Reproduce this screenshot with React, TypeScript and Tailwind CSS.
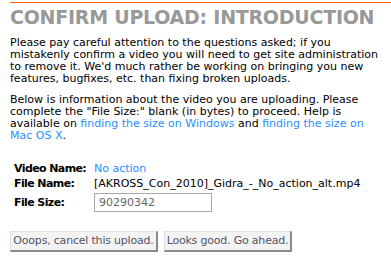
export default function App() {
  const font = { fontFamily: '"DejaVu Sans", Verdana, sans-serif' };
  const btn =
    "h-[21px] bg-[#f3f3f3] text-[#555566] text-[11px] tracking-[-0.2px] border-t border-l border-[#e0e0e0] border-r-2 border-b-2 border-r-[#8a8a8a] border-b-[#8a8a8a] whitespace-nowrap";
  return (
    <div className="bg-white w-[391px] h-[269px] overflow-hidden pl-[10px] pt-[2px] text-[11px] leading-[12px] text-black" style={font}>
      <div className="border-t border-[#ff6600] pt-[3px]">
        <h1 className="text-[19px] leading-[23px] font-bold text-[#999999] tracking-[-0.25px]">CONFIRM UPLOAD: INTRODUCTION</h1>
      </div>
      <div className="w-[376px] mt-[8px]">
        <p>
          Please pay careful attention to the questions asked; if you mistakenly confirm a video you will need to get site administration to remove it. We'd much rather be working on bringing you new features, bugfixes, etc. than fixing broken uploads.
        </p>
        <p className="mt-[9px]">
          Below is information about the video you are uploading. Please complete the "File Size:" blank (in bytes) to proceed. Help is available on{" "}
          <a className="text-[#1e90ff]">finding the size on Windows</a> and{" "}
          <a className="text-[#1e90ff]">finding the size on Mac OS X</a>.
        </p>
      </div>
      <div className="mt-[21px] pl-[4px] grid grid-cols-[80px_1fr] items-center gap-y-[3px]">
        <div className="font-bold tracking-[-0.6px]">Video Name:</div>
        <div className="text-[#1e90ff]">No action</div>
        <div className="font-bold tracking-[-0.6px]">File Name:</div>
        <div>[AKROSS_Con_2010]_Gidra_-_No_action_alt.mp4</div>
        <div className="font-bold tracking-[-0.6px]">File Size:</div>
        <div>
          <input
            className="w-[118px] h-[19px] border border-[#aaaaaa] px-[4px] text-[11px] text-[#666666] outline-none"
            style={font}
            defaultValue="90290342"
          />
        </div>
      </div>
      <div className="mt-[19px] flex gap-[6px]">
        <button className={`${btn} w-[148px]`} style={font}>
          Ooops, cancel this upload.
        </button>
        <button className={`${btn} w-[128px]`} style={font}>
          Looks good. Go ahead.
        </button>
      </div>
    </div>
  );
}
